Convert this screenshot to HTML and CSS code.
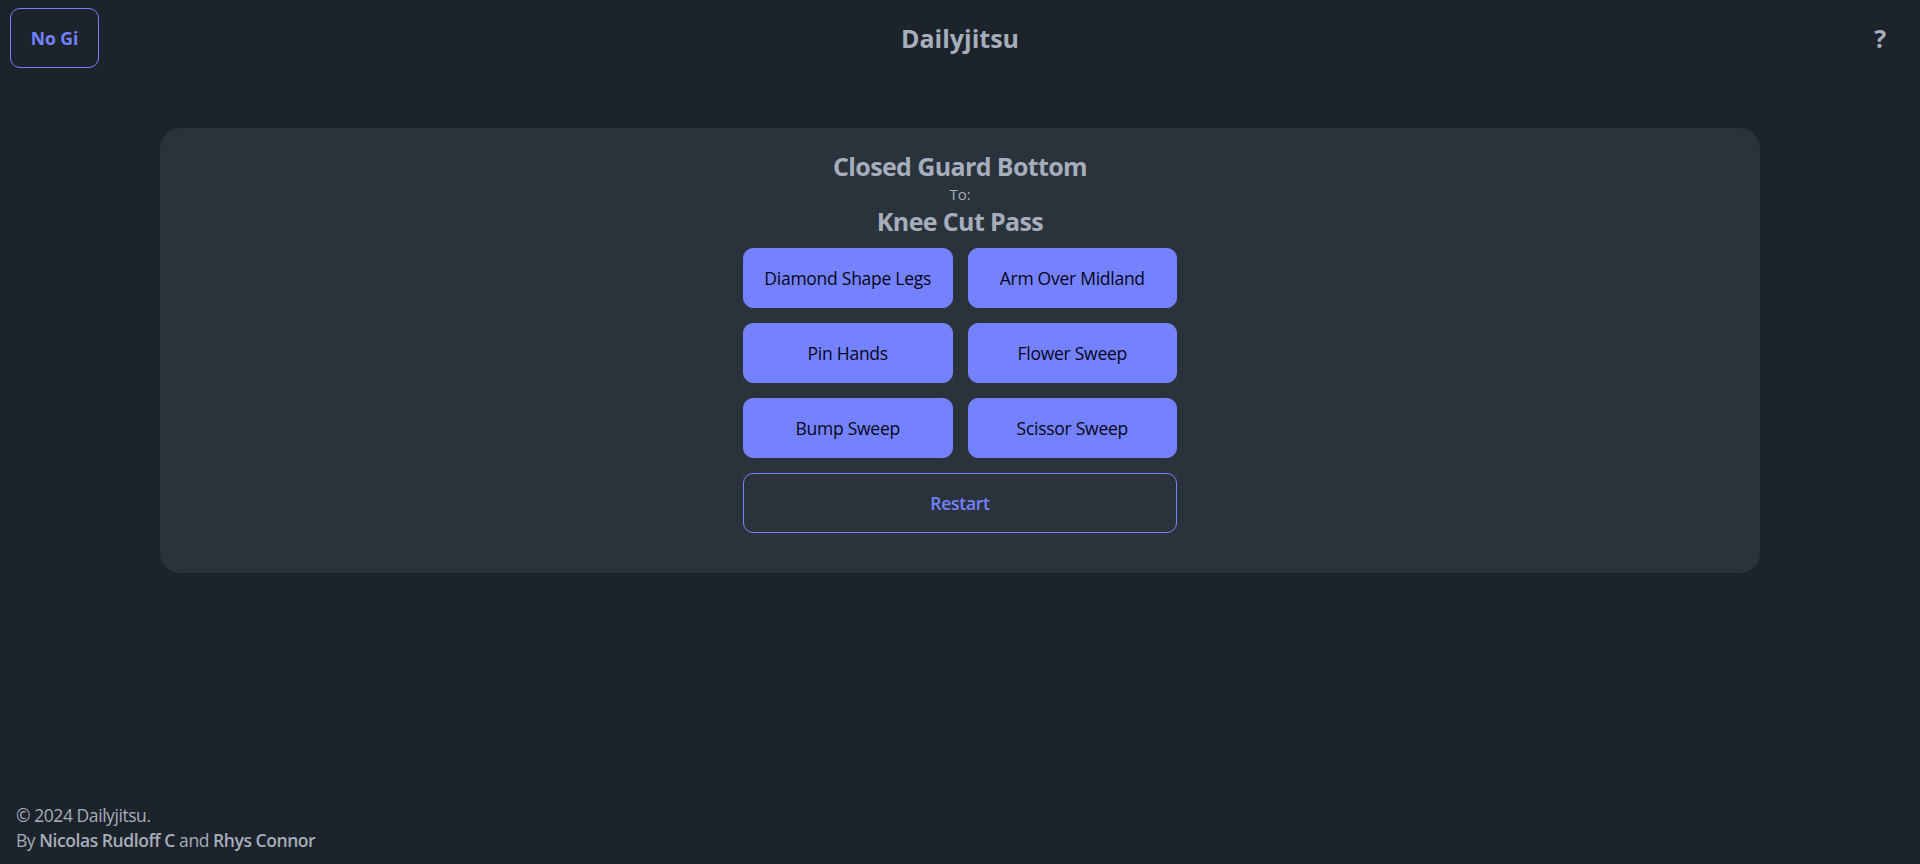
FILE: index.html
```html
<!DOCTYPE html>
<html lang="en">
<head>
<meta charset="utf-8">
<title>Dailyjitsu</title>
<link rel="stylesheet" href="styles.css">
</head>
<body>
<header class="navbar">
  <div class="nav-start"><button class="btn btn-outline mode-btn">No Gi</button></div>
  <div class="nav-center"><span class="logo">Dailyjitsu</span></div>
  <div class="nav-end"><button class="btn btn-ghost help-btn">?</button></div>
</header>
<main class="main">
  <section class="card">
    <h2 class="pos-title">Closed Guard Bottom</h2>
    <div class="pos-to">To:</div>
    <h2 class="pos-title">Knee Cut Pass</h2>
    <div class="choices">
      <button class="btn btn-primary choice">Diamond Shape Legs</button>
      <button class="btn btn-primary choice">Arm Over Midland</button>
      <button class="btn btn-primary choice">Pin Hands</button>
      <button class="btn btn-primary choice">Flower Sweep</button>
      <button class="btn btn-primary choice">Bump Sweep</button>
      <button class="btn btn-primary choice">Scissor Sweep</button>
      <button class="btn btn-outline restart">Restart</button>
    </div>
  </section>
</main>
<footer class="footer">
  <p class="foot-line">© 2024 Dailyjitsu.</p>
  <p class="foot-line">By <strong>Nicolas Rudloff C</strong> and <strong>Rhys Connor</strong></p>
</footer>
</body>
</html>
```

FILE: styles.css
```css
* { box-sizing: border-box; }
html, body { height: 100%; }
body {
  margin: 0;
  background: #1d232a;
  color: #a6adbb;
  font-family: "Open Sans", "Noto Sans", "Liberation Sans", sans-serif;
  display: flex;
  flex-direction: column;
  min-height: 100vh;
}
.navbar {
  display: grid;
  grid-template-columns: 1fr auto 1fr;
  align-items: center;
  padding: 8px 10px;
  height: 76px;
}
.nav-start { justify-self: start; }
.nav-end { justify-self: end; }
.logo {
  font-size: 25px;
  font-weight: 700;
  color: #a6adbb;
  line-height: 35px;
}
.btn {
  font-family: inherit;
  height: 60px;
  border-radius: 10px;
  font-size: 17.5px;
  font-weight: 600;
  letter-spacing: -0.015em;
  cursor: pointer;
  display: inline-flex;
  align-items: center;
  justify-content: center;
  padding: 0 20px;
}
.btn-outline {
  background: transparent;
  border: 1.25px solid #7582ff;
  color: #7582ff;
}
.mode-btn { width: 89px; padding: 0; font-weight: 700; letter-spacing: 0; }
.btn-ghost {
  background: transparent;
  border: none;
  color: #a6adbb;
}
.help-btn { width: 60px; padding: 0; font-size: 25px; font-weight: 700; }
.main {
  padding: 52px 160px 0;
}
.card {
  background: #2a323c;
  border-radius: 20px;
  padding: 21px 20px 40px;
  display: flex;
  flex-direction: column;
  align-items: center;
}
.pos-title {
  margin: 0;
  font-size: 25px;
  line-height: 35px;
  font-weight: 700;
  letter-spacing: -0.025em;
  color: #a6adbb;
}
.pos-to {
  font-size: 15px;
  line-height: 20px;
  font-weight: 500;
}
.choices {
  margin-top: 9px;
  width: 434px;
  display: grid;
  grid-template-columns: 1fr 1fr;
  gap: 15px;
}
.btn-primary {
  background: #7582ff;
  border: 1.25px solid #7582ff;
  color: #050617;
}
.choice { font-weight: 400; padding: 0 8px; }
.restart { grid-column: 1 / span 2; }
.footer {
  margin-top: auto;
  padding: 0 16px 11px;
  font-size: 17.5px;
  line-height: 25px;
  letter-spacing: -0.025em;
}
.foot-line { margin: 0; }
.foot-line strong { font-weight: 600; }
```
